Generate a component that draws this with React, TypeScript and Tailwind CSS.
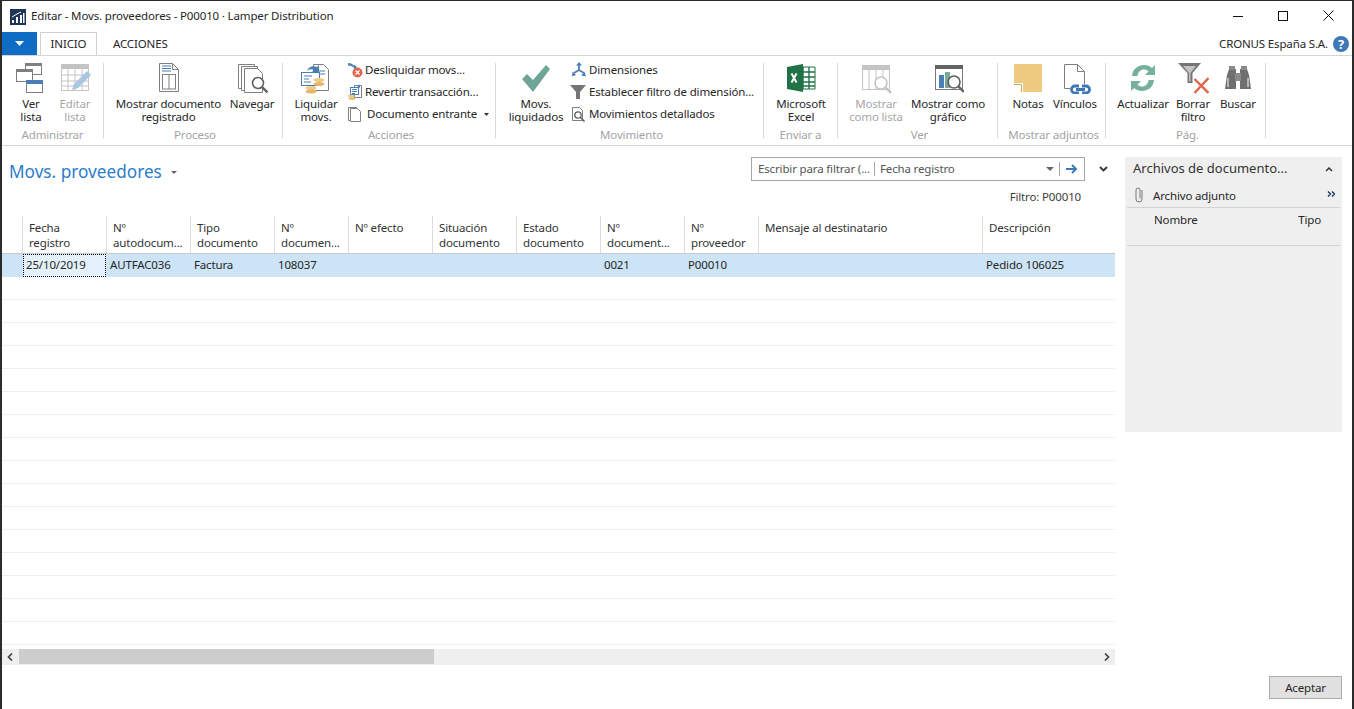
import type { ReactNode } from "react";

const G = "#7f7f7f";
const B = "#4a7fb5";
const D = "#c4c4c4";

function Big({ children }: { children: ReactNode }) {
  return (
    <svg width="32" height="32" viewBox="0 0 32 32" fill="none">
      {children}
    </svg>
  );
}

function Small({ children }: { children: ReactNode }) {
  return (
    <svg width="16" height="16" viewBox="0 0 16 16" fill="none" className="shrink-0">
      {children}
    </svg>
  );
}

const VerLista = (
  <Big>
    <rect x="10.5" y="1.5" width="16" height="11" fill="#fff" stroke={G} />
    <rect x="10" y="1" width="17" height="3" fill={G} />
    <rect x="1.5" y="7.5" width="16" height="12" fill="#fff" stroke={G} />
    <rect x="1" y="7" width="17" height="3" fill={G} />
    <rect x="11.5" y="18.5" width="16" height="12" fill="#fff" stroke={G} />
    <rect x="11" y="18" width="17" height="4" fill={B} />
  </Big>
);

const EditarLista = (
  <Big>
    <rect x="2.5" y="2.5" width="27" height="26" fill="#fff" stroke={D} />
    <rect x="2" y="2" width="28" height="5" fill={D} />
    <path d="M2 13h28M2 19h28M2 24h28M9 7v22M16 7v22M23 7v22" stroke={D} />
    <path d="M13 28l2-6L28 9l4 4-13 13z" fill="#a9c7e4" />
  </Big>
);

const MostrarDoc = (
  <Big>
    <path d="M6.500 1.500h13l6 6v22h-19z" fill="#fff" stroke={G} />
    <path d="M19.500 1.500v6h6" stroke={G} />
    <path d="M9 4h9M9 6.500h9M9 9h9" stroke={B} />
    <rect x="9.500" y="12.500" width="13" height="14.500" stroke={G} />
    <path d="M16 12.500V27" stroke={G} />
  </Big>
);

const Navegar = (
  <Big>
    <path d="M2.500 2.500h16v24h-16z" fill="#fff" stroke={G} />
    <path d="M5.500 4.500h16v24h-16z" fill="#fff" stroke={G} />
    <path d="M8.500 6.500h13l5 5v19h-18z" fill="#fff" stroke={G} />
    <circle cx="22" cy="21" r="5.500" fill="#fff" stroke="#606060" strokeWidth="1.600" />
    <path d="M26 25l5.500 5.500" stroke="#606060" strokeWidth="2.400" />
  </Big>
);

const Liquidar = (
  <Big>
    <path d="M13.500 2.500h10l5 5v21h-15z" fill="#fff" stroke={G} />
    <path d="M16 9h9M16 12h9" stroke={B} />
    <rect x="1.500" y="10.500" width="18" height="13" fill="#fff" stroke={B} />
    <path d="M4 14h8M4 17h5M4 20h7" stroke={B} />
    <path d="M7 9c1-4 6-6 10-4l2-2v7h-7l2-2c-2-1-5-1-7 1z" fill={B} />
    <ellipse cx="19" cy="18" rx="5.500" ry="2" fill="#eecb88" />
    <ellipse cx="19" cy="22" rx="5.500" ry="2" fill="#e6b666" />
    <ellipse cx="11" cy="26" rx="5.500" ry="2" fill="#eecb88" />
    <ellipse cx="11" cy="29.500" rx="5.500" ry="2" fill="#e6b666" />
  </Big>
);

const Desliquidar = (
  <Small>
    <path d="M1 1c3 0 5 1 6 3V2.500L10 5 7 8V6C6 4.500 4 3.500 1 3.500z" fill={B} />
    <circle cx="10.500" cy="10.500" r="5" fill="#e0654e" />
    <path d="M8.500 8.500l4 4M12.500 8.500l-4 4" stroke="#fff" strokeWidth="1.300" />
  </Small>
);

const Revertir = (
  <Small>
    <path d="M7.500 1.500h7v12h-7z" fill="#fff" stroke={G} />
    <rect x="3.500" y="3.500" width="8" height="7" fill="#fff" stroke={B} />
    <path d="M5 5.500h5M5 7.500h5M5 9.500h3" stroke={B} />
    <path d="M10 2l3-1.500V4z" fill={B} />
    <ellipse cx="4" cy="12" rx="3.500" ry="1.300" fill="#eecb88" />
    <ellipse cx="5" cy="14.500" rx="3.500" ry="1.300" fill="#e6b666" />
  </Small>
);

const Documento = (
  <Small>
    <path d="M1.500 1.500h8v13h-8z" fill="#fff" stroke={G} />
    <path d="M3.500 2.500h7l3 3v10h-10z" fill="#fff" stroke={G} />
  </Small>
);

const Check = (
  <Big>
    <path d="M2 17l5-5 6 6L26 3l4 4-17 23z" fill="#6fa595" />
  </Big>
);

const Dimensiones = (
  <Small>
    <path d="M9 1.500v6.500l-5 3M9 8l5 3" stroke={B} strokeWidth="1.800" />
    <path d="M9 0l3 3.500H6zM2 14.500l.5-5 3.500 3.500zM16 14.500l-5-1 3.500-3.500z" fill={B} />
  </Small>
);

const Embudo = (
  <Small>
    <path d="M0 1h16L10 8v7H6V8z" fill="#757575" />
  </Small>
);

const Detallados = (
  <Small>
    <path d="M2.500 1.500h7l3 3v10h-10z" fill="#fff" stroke={G} />
    <circle cx="8" cy="9" r="3.200" stroke="#606060" strokeWidth="1.300" fill="#fff" />
    <path d="M10.500 11.500l4 4" stroke="#606060" strokeWidth="1.600" />
  </Small>
);

const Excel = (
  <Big>
    <path d="M13 5h17v22H13z" fill="#fff" stroke="#1f7346" />
    <path d="M18 5v22M24 5v22M13 10h17M13 15h17M13 20h17M13 24h17" stroke="#1f7346" strokeWidth="1.400" />
    <path d="M2 5l16-3v28L2 27z" fill="#1f7346" />
    <path d="M6.500 11.500l5 9M11.500 11.500l-5 9" stroke="#fff" strokeWidth="2" />
  </Big>
);

const ComoLista = (
  <Big>
    <rect x="2.500" y="3.500" width="27" height="24" fill="#fff" stroke={D} />
    <rect x="2" y="3" width="28" height="5" fill={D} />
    <path d="M9 8v20M16 8v20M23 8v20" stroke={D} />
    <circle cx="21" cy="21" r="6" fill="#fff" stroke={D} strokeWidth="1.600" />
    <path d="M25 25l6 6" stroke={D} strokeWidth="2.400" />
  </Big>
);

const ComoGrafico = (
  <Big>
    <rect x="3.500" y="3.500" width="27" height="24" fill="#fff" stroke="#7a7a7a" />
    <rect x="3" y="3" width="28" height="4" fill="#636363" />
    <rect x="7" y="13" width="5" height="13" fill={B} />
    <rect x="13" y="10" width="5" height="16" fill="#78ab9c" />
    <circle cx="22" cy="20" r="6" fill="#ffffffc0" stroke="#606060" strokeWidth="1.700" />
    <path d="M26 24l6 6" stroke="#606060" strokeWidth="2.400" />
  </Big>
);

const Notas = (
  <Big>
    <path d="M2 2h28v28H11l-9-9z" fill="#eeca7e" />
    <path d="M2 21h9v9z" fill="#fff" />
    <path d="M2 22.500h7.500V30" stroke="#c9a862" />
  </Big>
);

const Vinculos = (
  <Big>
    <path d="M5.500 2.500h13l7 7v17h-20z" fill="#fff" stroke={G} />
    <path d="M18.500 2.500v7h7" stroke={G} />
    <rect x="11" y="22" width="21" height="10" fill="#fff" />
    <path d="M20 24h-4a3.500 3.500 0 000 7h4M23 31h4a3.500 3.500 0 000-7h-4M17 27.500h9" stroke="#3f78b5" strokeWidth="2.800" />
  </Big>
);

const Actualizar = (
  <Big>
    <path d="M5 14C5.500 7 11 3 17 3c3 0 6 1 8 3l3-3v10H18l3.500-3.500C20 8 18.500 7.500 17 7.500 13.500 7.500 11 10 10.500 14z" fill="#78b09e" />
    <path d="M27 18c-.5 7-6 11-12 11-3 0-6-1-8-3l-3 3V19h10l-3.500 3.500c1.500 1.500 3 2 4.500 2 3.500 0 6-2.500 6.500-6.500z" fill="#78b09e" />
  </Big>
);

const Borrar = (
  <Big>
    <path d="M1 1h23L15.500 11v10H10.500V11z" fill="#757575" />
    <path d="M6 4h13l-5.500 7v8.500h-1.500V11z" fill="#c4c4c4" />
    <path d="M17.500 17l14 14M31.500 16l-14 15" stroke="#dd6548" strokeWidth="2.400" />
  </Big>
);

const Buscar = (
  <Big>
    <path d="M5 13L7 7h7v20H3z" fill="#6f6f6f" />
    <path d="M27 13L25 7h-7v20h11z" fill="#6f6f6f" />
    <rect x="7" y="4" width="6" height="4" fill="#8a8a8a" />
    <rect x="19" y="4" width="6" height="4" fill="#8a8a8a" />
    <rect x="13" y="11" width="6" height="8" fill="#8a8a8a" />
    <path d="M6 16v9M26 16v9" stroke="#fff" />
  </Big>
);

function BigButton({ icon, lines, w, off }: { icon: ReactNode; lines: string[]; w: string; off?: boolean }) {
  return (
    <div className={`${w} shrink-0 flex flex-col items-center ${off ? "text-[#a6a6a6]" : "text-[#262626]"}`}>
      <div className="h-[32px] flex justify-center">{icon}</div>
      <div className="mt-[3px] text-center leading-[13px] whitespace-nowrap">
        {lines.map((l) => (
          <div key={l}>{l}</div>
        ))}
      </div>
    </div>
  );
}

function SmallRow({ icon, children, gap }: { icon: ReactNode; children: ReactNode; gap: string }) {
  return (
    <div className={`h-[22px] flex items-center whitespace-nowrap text-[#262626] ${gap}`}>
      {icon}
      {children}
    </div>
  );
}

function Group({ w, pl, label, lp = "pl-[4px]", children }: { w: string; pl: string; label: string; lp?: string; children: ReactNode }) {
  return (
    <div className={`${w} shrink-0 flex flex-col`}>
      <div className={`h-[66px] flex ${pl}`}>{children}</div>
      <div className={`h-[13px] leading-[13px] text-center text-[#a3a3a3] ${lp}`}>{label}</div>
    </div>
  );
}

const Sep = () => <div className="w-px h-[75px] mt-px shrink-0 bg-[#d9d9d9]" />;

const columns = [
  { w: "w-[84px]", h: ["Fecha", "registro"], v: "25/10/2019" },
  { w: "w-[84px]", h: ["Nº", "autodocum..."], v: "AUTFAC036" },
  { w: "w-[84px]", h: ["Tipo", "documento"], v: "Factura" },
  { w: "w-[74px]", h: ["Nº", "documen..."], v: "108037" },
  { w: "w-[84px]", h: ["Nº efecto"], v: "" },
  { w: "w-[84px]", h: ["Situación", "documento"], v: "" },
  { w: "w-[84px]", h: ["Estado", "documento"], v: "" },
  { w: "w-[84px]", h: ["Nº", "document..."], v: "0021" },
  { w: "w-[74px]", h: ["Nº", "proveedor"], v: "P00010" },
  { w: "w-[224px]", h: ["Mensaje al destinatario"], v: "" },
  { w: "flex-1", h: ["Descripción"], v: "Pedido 106025" },
];

const emptyRows = Array.from({ length: 16 }, (_, i) => i);

export default function App() {
  return (
    <div className="w-[1354px] h-[709px] overflow-hidden bg-white border-l-2 border-r-2 border-t border-[#2b2b2b] flex flex-col text-[11.5px] text-[#262626] font-['Noto_Sans','Open_Sans',sans-serif] tracking-[-0.15px]">
      {/* title bar */}
      <div className="h-[31px] shrink-0 flex items-center pl-[8px]">
        <svg width="16" height="16" viewBox="0 0 16 16" className="shrink-0">
          <rect width="16" height="16" fill="#1d3557" />
          <path d="M2 14v-3h2v3zM6 14V8h2v6zM10 14V6h2v8zM13 14V4h1.500v10z" fill="#fff" />
          <path d="M2 8l5-3 4-2" stroke="#fff" fill="none" />
        </svg>
        <span className="ml-[5px] -mt-[2px]">Editar - Movs. proveedores - P00010 · Lamper Distribution</span>
        <div className="ml-auto -mt-[2px] flex items-center pr-[18px] gap-[35px]">
          <svg width="10" height="10" viewBox="0 0 10 10"><path d="M0 5.500h10" stroke="#111" /></svg>
          <svg width="10" height="10" viewBox="0 0 10 10" fill="none"><rect x=".5" y=".5" width="9" height="9" stroke="#111" /></svg>
          <svg width="11" height="11" viewBox="0 0 11 11"><path d="M.5.500l10 10M10.500.500l-10 10" stroke="#111" /></svg>
        </div>
      </div>

      {/* tabs */}
      <div className="h-[23px] shrink-0 flex items-end">
        <div className="w-[35px] h-[23px] bg-[#0f6cc4] flex items-center justify-center">
          <svg width="9" height="5" viewBox="0 0 9 5"><path d="M0 0h9L4.500 5z" fill="#fff" /></svg>
        </div>
        <div className="ml-[3px] w-[57px] h-[23px] border border-b-0 border-[#cfcfcf] bg-white flex items-center justify-center">INICIO</div>
        <div className="ml-[16px]">
          <div className="h-[23px] flex items-center">ACCIONES</div>
        </div>
        <div className="ml-auto h-[23px] flex items-center pr-[3px]">
          <span>CRONUS España S.A.</span>
          <span className="ml-[5px] w-[16px] h-[16px] rounded-full bg-[#3f78b5] text-white font-bold text-[13px] leading-[16px] text-center">?</span>
        </div>
      </div>

      {/* ribbon */}
      <div className="h-[91px] shrink-0 border-y border-[#d5d5d5] pt-[6px] flex">
        <Group w="w-[101px]" pl="pl-[7px]" lp="" label="Administrar">
          <BigButton w="w-[44px]" icon={VerLista} lines={["Ver", "lista"]} />
          <BigButton w="w-[44px]" icon={EditarLista} lines={["Editar", "lista"]} off />
        </Group>
        <Sep />
        <Group w="w-[178px]" pl="pl-[6px]" label="Proceso">
          <BigButton w="w-[117px]" icon={MostrarDoc} lines={["Mostrar documento", "registrado"]} />
          <BigButton w="w-[50px]" icon={Navegar} lines={["Navegar"]} />
        </Group>
        <Sep />
        <Group w="w-[212px]" pl="pl-[8px]" label="Acciones">
          <BigButton w="w-[50px]" icon={Liquidar} lines={["Liquidar", "movs."]} />
          <div className="ml-[6px] -mt-[3px]">
            <SmallRow icon={Desliquidar} gap="gap-[2px]">Desliquidar movs...</SmallRow>
            <SmallRow icon={Revertir} gap="gap-[2px]">Revertir transacción...</SmallRow>
            <SmallRow icon={Documento} gap="gap-[4px]">
              Documento entrante
              <svg width="5" height="3" viewBox="0 0 5 3" className="ml-[3px]"><path d="M0 0h5L2.500 3z" fill="#333" /></svg>
            </SmallRow>
          </div>
        </Group>
        <Sep />
        <Group w="w-[267px]" pl="pl-[10px]" label="Movimiento">
          <BigButton w="w-[60px]" icon={Check} lines={["Movs.", "liquidados"]} />
          <div className="ml-[4px] -mt-[3px]">
            <SmallRow icon={Dimensiones} gap="gap-[3px]">Dimensiones</SmallRow>
            <SmallRow icon={Embudo} gap="gap-[3px]">Establecer filtro de dimensión...</SmallRow>
            <SmallRow icon={Detallados} gap="gap-[3px]">Movimientos detallados</SmallRow>
          </div>
        </Group>
        <Sep />
        <Group w="w-[73px]" pl="pl-[7px]" lp="" label="Enviar a">
          <BigButton w="w-[60px]" icon={Excel} lines={["Microsoft", "Excel"]} />
        </Group>
        <Sep />
        <Group w="w-[159px]" pl="pl-[8px]" label="Ver">
          <BigButton w="w-[60px]" icon={ComoLista} lines={["Mostrar", "como lista"]} off />
          <BigButton w="w-[84px]" icon={ComoGrafico} lines={["Mostrar como", "gráfico"]} />
        </Group>
        <Sep />
        <Group w="w-[107px]" pl="pl-[8px]" label="Mostrar adjuntos">
          <BigButton w="w-[44px]" icon={Notas} lines={["Notas"]} />
          <BigButton w="w-[50px]" icon={Vinculos} lines={["Vínculos"]} />
        </Group>
        <Sep />
        <Group w="w-[159px]" pl="pl-[9px]" label="Pág.">
          <BigButton w="w-[56px]" icon={Actualizar} lines={["Actualizar"]} />
          <BigButton w="w-[44px]" icon={Borrar} lines={["Borrar", "filtro"]} />
          <BigButton w="w-[46px]" icon={Buscar} lines={["Buscar"]} />
        </Group>
        <Sep />
      </div>

      {/* content */}
      <div className="h-[519px] shrink-0 flex">
        <div className="w-[1113px] shrink-0 flex flex-col">
          <div className="h-[70px] shrink-0 flex pt-[11px]">
            <div className="ml-[7px] mt-[2px] flex items-center h-[26px] self-start">
              <span className="text-[17.2px] text-[#2b7cca] tracking-[0]">Movs. proveedores</span>
              <svg width="6" height="3" viewBox="0 0 6 3" className="ml-[9px]"><path d="M0 0h6L3 3z" fill="#666" /></svg>
            </div>
            <div className="ml-auto mr-[7px] flex flex-col items-end w-[357px]">
              <div className="flex items-center w-full">
                <div className="w-[334px] h-[24px] border border-[#a6a6a6] flex items-center text-[#555]">
                  <span className="w-[123px] pl-[6px] whitespace-nowrap border-r border-[#a6a6a6] h-[14px] leading-[14px]">Escribir para filtrar (...</span>
                  <span className="pl-[5px] flex-1">Fecha registro</span>
                  <svg width="8" height="4" viewBox="0 0 8 4"><path d="M0 0h8L4 4z" fill="#666" /></svg>
                  <span className="ml-[5px] w-px h-[14px] bg-[#a6a6a6]" />
                  <svg width="12" height="10" viewBox="0 0 12 10" className="mx-[6px]"><path d="M0 5h9M6 1l4 4-4 4" stroke="#3f78b5" strokeWidth="2" fill="none" /></svg>
                </div>
                <svg width="9" height="6" viewBox="0 0 9 6" className="ml-auto"><path d="M1 1l3.500 3.500L8 1" stroke="#333" strokeWidth="1.800" fill="none" /></svg>
              </div>
              <div className="mt-[8px] mr-[27px] leading-[16px] text-[#404040]">Filtro: P00010</div>
            </div>
          </div>

          {/* table */}
          <div className="h-[38px] shrink-0 flex pl-[20px] border-b border-[#c9c9c9]">
            {columns.map((c) => (
              <div key={c.h.join()} className={`${c.w} border-l border-[#dcdcdc] pl-[6px] pt-[4px] leading-[15px] whitespace-nowrap text-[#333]`}>
                {c.h.map((t) => (
                  <div key={t}>{t}</div>
                ))}
              </div>
            ))}
          </div>
          <div className="h-[23px] shrink-0 flex pl-[21px] bg-[#cde4f6] items-stretch">
            {columns.map((c, i) => (
              <div
                key={c.h.join()}
                className={`${i === 0 ? "w-[83px] bg-[#e4f1fa] outline-1 outline-dotted -outline-offset-1 outline-black pl-[3px]" : `${c.w} pl-[4px]`} flex items-center whitespace-nowrap pb-[2px]`}
              >
                {c.v}
              </div>
            ))}
          </div>
          <div className="flex-1">
            {emptyRows.map((r) => (
              <div key={r} className="h-[23px] border-b border-[#eeeeee]" />
            ))}
          </div>
          <div className="h-[16px] shrink-0 bg-[#efefef] flex items-center">
            <svg width="6" height="8" viewBox="0 0 6 8" className="ml-[5px]"><path d="M5 .500L1.500 4 5 7.500" stroke="#444" strokeWidth="1.700" fill="none" /></svg>
            <div className="ml-[6px] w-[415px] h-[15px] self-start bg-[#cdcdcd]" />
            <svg width="6" height="8" viewBox="0 0 6 8" className="ml-auto mr-[5px]"><path d="M1 .500L4.500 4 1 7.500" stroke="#444" strokeWidth="1.700" fill="none" /></svg>
          </div>
        </div>

        {/* side panel */}
        <div className="ml-[10px] mt-[11px] w-[217px] h-[275px] bg-[#efefef] flex flex-col">
          <div className="h-[24px] mb-[3px] flex items-center pl-[8px] pr-[9px] shrink-0">
            <span className="text-[13px] tracking-[0] text-[#333]">Archivos de documento...</span>
            <svg width="8" height="5" viewBox="0 0 8 5" className="ml-auto"><path d="M1 4l3-3 3 3" stroke="#333" strokeWidth="1.500" fill="none" /></svg>
          </div>
          <div className="mx-[2px] h-[24px] border-b border-[#d4d4d4] flex items-center shrink-0">
            <svg width="10" height="16" viewBox="0 0 10 16" className="ml-[7px] -mt-[2px]" fill="none"><path d="M8 3v9a3 3 0 01-6 0V3a2 2 0 014 0v8.500" stroke="#777" /></svg>
            <span className="ml-[9px]">Archivo adjunto</span>
            <svg width="8" height="6" viewBox="0 0 8 6" className="ml-auto mr-[5px] -mt-[3px]" fill="none"><path d="M1 .500L3.500 3 1 5.500M5 .500L7.500 3 5 5.500" stroke="#1d3557" strokeWidth="1.400" /></svg>
          </div>
          <div className="mx-[2px] h-[38px] border-b border-[#d4d4d4] flex pt-[4px] pl-[27px] pr-[19px] justify-between shrink-0 leading-[16px]">
            <span>Nombre</span>
            <span>Tipo</span>
          </div>
        </div>
      </div>

      {/* footer */}
      <div className="flex justify-end pt-[11px] pr-[10px]">
        <button className="w-[73px] h-[23px] border border-[#adadad] bg-[#e1e1e1] text-[#262626] flex items-center justify-center">Aceptar</button>
      </div>
    </div>
  );
}
